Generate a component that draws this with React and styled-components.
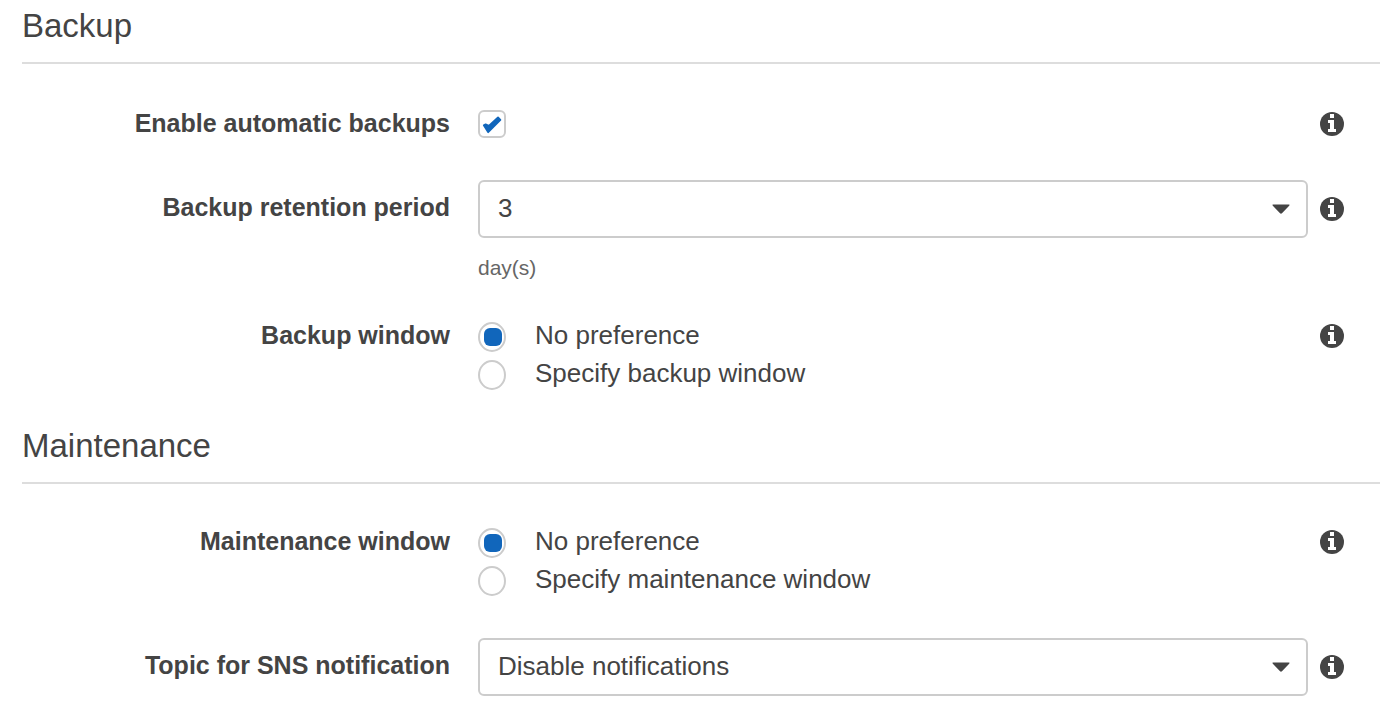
import React from "react";
import styled, { createGlobalStyle } from "styled-components";

const ink = "#444";
const line = "#ccc";
const blue = "#1166bb";

const GlobalStyle = createGlobalStyle`
  *, *::before, *::after { box-sizing: border-box; }
  body {
    margin: 0;
    background: #fff;
    color: ${ink};
    font: 26px/26px "Liberation Sans", Arial, sans-serif;
  }
`;

const Page = styled.main`
  display: flex;
  flex-direction: column;
  gap: 36px;
  padding: 6px 0 28px 22px;
`;

const Heading = styled.h2`
  margin: 0;
  padding-bottom: 16px;
  border-bottom: 2px solid #ddd;
  font-size: 33px;
  font-weight: 400;
  line-height: 40px;
`;

const Fields = styled.div`
  display: flex;
  flex-direction: column;
  gap: 42px;
  padding: ${(p) => p.$top}px 36px 0 0;
`;

const Row = styled.div`
  display: grid;
  grid-template-columns: 428px minmax(0, 1fr) 24px;
  align-items: start;
`;

const Label = styled.label`
  font-size: 25px;
  font-weight: 700;
  line-height: ${(p) => (p.$tall ? 54 : 26)}px;
  text-align: right;
`;

const Control = styled.div`
  padding: 0 12px 0 28px;
`;

const InfoButton = styled.button`
  display: flex;
  align-items: center;
  justify-content: center;
  width: 24px;
  height: ${(p) => (p.$tall ? 58 : 28)}px;
  padding: 0;
  border: 0;
  background: none;
  cursor: pointer;
`;

const CheckHolder = styled.span`
  display: grid;
  width: 28px;
  height: 28px;

  > * { grid-area: 1 / 1; }
  svg { pointer-events: none; }
  input:not(:checked) + svg { visibility: hidden; }
`;

const Checkbox = styled.input`
  appearance: none;
  width: 28px;
  height: 28px;
  margin: 0;
  border: 2px solid ${line};
  border-radius: 6px;
  background: #fff;
`;

const SelectHolder = styled.div`
  display: grid;
  align-items: center;

  > * { grid-area: 1 / 1; }
  svg {
    justify-self: end;
    margin-right: 17px;
    pointer-events: none;
  }
`;

const Select = styled.select`
  appearance: none;
  width: 100%;
  height: 58px;
  padding: 0 48px 2px 18px;
  border: 2px solid ${line};
  border-radius: 6px;
  background: #fff;
  color: ${ink};
  font: inherit;
`;

const Help = styled.p`
  margin: 18px 0 0;
  color: #666;
  font-size: 21px;
  line-height: 24px;
`;

const Options = styled.div`
  display: flex;
  flex-direction: column;
  gap: 8px;
`;

const Option = styled.label`
  display: flex;
  align-items: flex-start;
  gap: 29px;
`;

const Radio = styled.input`
  appearance: none;
  flex: none;
  width: 28px;
  height: 30px;
  margin: 0;
  padding: 4px;
  border: 2px solid ${line};
  border-radius: 50%;
  background: #fff;

  &:checked::after {
    content: "";
    display: block;
    width: 18px;
    height: 18px;
    border-radius: 6px;
    background: ${blue};
  }
`;

function Info({ about, tall }) {
  return (
    <InfoButton type="button" aria-label={`About ${about}`} $tall={tall}>
      <svg width="24" height="24" viewBox="0 0 24 24" aria-hidden="true">
        <circle cx="12" cy="12" r="12" fill={ink} />
        <path d="M10 2h4v4h-4zM8 8h6v9h2v3H8v-3h2v-6H8z" fill="#fff" />
      </svg>
    </InfoButton>
  );
}

function SelectField({ id, label, options, help }) {
  return (
    <Row>
      <Label htmlFor={id} $tall>{label}</Label>
      <Control>
        <SelectHolder>
          <Select id={id} defaultValue={options[0]}>
            {options.map((o) => <option key={o}>{o}</option>)}
          </Select>
          <svg width="20" height="12" viewBox="0 0 20 12" aria-hidden="true">
            <path d="M2.2 1.5h15.6q1.5 0 .4 1.2l-7 7.4q-1.2 1.2-2.4 0l-7-7.4q-1.1-1.2.4-1.2z" fill={ink} />
          </svg>
        </SelectHolder>
        {help && <Help>{help}</Help>}
      </Control>
      <Info about={label} tall />
    </Row>
  );
}

function RadioField({ id, label, options }) {
  return (
    <Row>
      <Label as="span" id={id}>{label}</Label>
      <Control>
        <Options role="radiogroup" aria-labelledby={id}>
          {options.map((o, i) => (
            <Option key={o}>
              <Radio type="radio" name={`${id}-choice`} defaultChecked={i === 0} />
              <span>{o}</span>
            </Option>
          ))}
        </Options>
      </Control>
      <Info about={label} />
    </Row>
  );
}

export default function App() {
  return (
    <>
      <GlobalStyle />
      <Page>
        <section>
          <Heading>Backup</Heading>
          <Fields $top={46}>
            <Row>
              <Label htmlFor="auto-backups">Enable automatic backups</Label>
              <Control>
                <CheckHolder>
                  <Checkbox id="auto-backups" type="checkbox" defaultChecked />
                  <svg width="28" height="28" viewBox="0 0 28 28" aria-hidden="true">
                    <path
                      d="M5.8 15.2l1.8-.9 3.2 1.6 9.2-8.4 2.4 2.4L10.2 22.2z"
                      fill={blue}
                      stroke={blue}
                      strokeWidth="1.8"
                      strokeLinejoin="round"
                    />
                  </svg>
                </CheckHolder>
              </Control>
              <Info about="Enable automatic backups" />
            </Row>
            <SelectField id="retention" label="Backup retention period" options={["3"]} help="day(s)" />
            <RadioField
              id="backup-window"
              label="Backup window"
              options={["No preference", "Specify backup window"]}
            />
          </Fields>
        </section>
        <section>
          <Heading>Maintenance</Heading>
          <Fields $top={44}>
            <RadioField
              id="maintenance-window"
              label="Maintenance window"
              options={["No preference", "Specify maintenance window"]}
            />
            <SelectField
              id="sns-topic"
              label="Topic for SNS notification"
              options={["Disable notifications"]}
            />
          </Fields>
        </section>
      </Page>
    </>
  );
}
